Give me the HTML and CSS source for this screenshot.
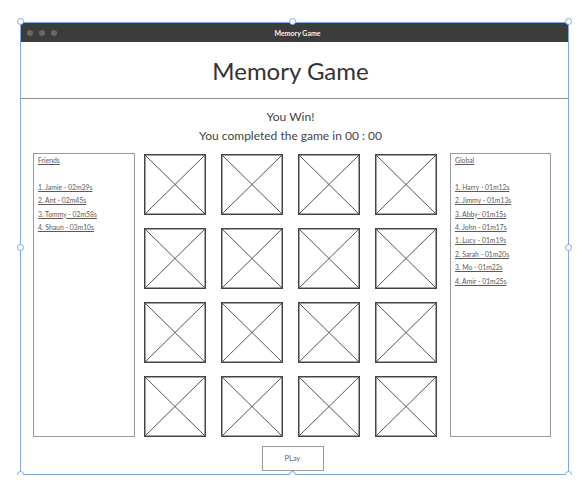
FILE: index.html
```html
<!DOCTYPE html>
<html lang="en">
<head>
<meta charset="utf-8">
<title>Memory Game</title>
<link rel="stylesheet" href="styles.css">
</head>
<body>
<div class="window">
  <div class="titlebar">
    <div class="dots"><span class="dot"></span><span class="dot"></span><span class="dot"></span></div>
    <div class="titlebar-text">Memory Game</div>
  </div>
  <header class="header"><h1 class="title">Memory Game</h1></header>
  <section class="status">
    <p class="status-line">You Win!</p>
    <p class="status-line">You completed the game in 00 : 00</p>
  </section>
  <main class="board-row">
    <aside class="panel">
      <div class="panel-title">Friends</div>
      <ol class="scores">
        <li>1. Jamie - 02m39s</li>
        <li>2. Ant - 02m45s</li>
        <li>3. Tommy - 02m58s</li>
        <li>4. Shaun - 03m10s</li>
      </ol>
    </aside>
    <div class="grid">
      <svg class="card" viewBox="0 0 62 61"><rect x="0.75" y="0.75" width="60.5" height="59.5"/><line x1="1" y1="1" x2="61" y2="60"/><line x1="61" y1="1" x2="1" y2="60"/></svg>
      <svg class="card" viewBox="0 0 62 61"><rect x="0.75" y="0.75" width="60.5" height="59.5"/><line x1="1" y1="1" x2="61" y2="60"/><line x1="61" y1="1" x2="1" y2="60"/></svg>
      <svg class="card" viewBox="0 0 62 61"><rect x="0.75" y="0.75" width="60.5" height="59.5"/><line x1="1" y1="1" x2="61" y2="60"/><line x1="61" y1="1" x2="1" y2="60"/></svg>
      <svg class="card" viewBox="0 0 62 61"><rect x="0.75" y="0.75" width="60.5" height="59.5"/><line x1="1" y1="1" x2="61" y2="60"/><line x1="61" y1="1" x2="1" y2="60"/></svg>
      <svg class="card" viewBox="0 0 62 61"><rect x="0.75" y="0.75" width="60.5" height="59.5"/><line x1="1" y1="1" x2="61" y2="60"/><line x1="61" y1="1" x2="1" y2="60"/></svg>
      <svg class="card" viewBox="0 0 62 61"><rect x="0.75" y="0.75" width="60.5" height="59.5"/><line x1="1" y1="1" x2="61" y2="60"/><line x1="61" y1="1" x2="1" y2="60"/></svg>
      <svg class="card" viewBox="0 0 62 61"><rect x="0.75" y="0.75" width="60.5" height="59.5"/><line x1="1" y1="1" x2="61" y2="60"/><line x1="61" y1="1" x2="1" y2="60"/></svg>
      <svg class="card" viewBox="0 0 62 61"><rect x="0.75" y="0.75" width="60.5" height="59.5"/><line x1="1" y1="1" x2="61" y2="60"/><line x1="61" y1="1" x2="1" y2="60"/></svg>
      <svg class="card" viewBox="0 0 62 61"><rect x="0.75" y="0.75" width="60.5" height="59.5"/><line x1="1" y1="1" x2="61" y2="60"/><line x1="61" y1="1" x2="1" y2="60"/></svg>
      <svg class="card" viewBox="0 0 62 61"><rect x="0.75" y="0.75" width="60.5" height="59.5"/><line x1="1" y1="1" x2="61" y2="60"/><line x1="61" y1="1" x2="1" y2="60"/></svg>
      <svg class="card" viewBox="0 0 62 61"><rect x="0.75" y="0.75" width="60.5" height="59.5"/><line x1="1" y1="1" x2="61" y2="60"/><line x1="61" y1="1" x2="1" y2="60"/></svg>
      <svg class="card" viewBox="0 0 62 61"><rect x="0.75" y="0.75" width="60.5" height="59.5"/><line x1="1" y1="1" x2="61" y2="60"/><line x1="61" y1="1" x2="1" y2="60"/></svg>
      <svg class="card" viewBox="0 0 62 61"><rect x="0.75" y="0.75" width="60.5" height="59.5"/><line x1="1" y1="1" x2="61" y2="60"/><line x1="61" y1="1" x2="1" y2="60"/></svg>
      <svg class="card" viewBox="0 0 62 61"><rect x="0.75" y="0.75" width="60.5" height="59.5"/><line x1="1" y1="1" x2="61" y2="60"/><line x1="61" y1="1" x2="1" y2="60"/></svg>
      <svg class="card" viewBox="0 0 62 61"><rect x="0.75" y="0.75" width="60.5" height="59.5"/><line x1="1" y1="1" x2="61" y2="60"/><line x1="61" y1="1" x2="1" y2="60"/></svg>
      <svg class="card" viewBox="0 0 62 61"><rect x="0.75" y="0.75" width="60.5" height="59.5"/><line x1="1" y1="1" x2="61" y2="60"/><line x1="61" y1="1" x2="1" y2="60"/></svg>
    </div>
    <aside class="panel panel-global">
      <div class="panel-title">Global</div>
      <ol class="scores">
        <li>1. Harry - 01m12s</li>
        <li>2. Jimmy - 01m13s</li>
        <li>3. Abby- 01m15s</li>
        <li>4. John - 01m17s</li>
        <li>1. Lucy - 01m19s</li>
        <li>2. Sarah - 01m20s</li>
        <li>3. Mo - 01m22s</li>
        <li>4. Amir - 01m25s</li>
      </ol>
    </aside>
  </main>
  <div class="actions"><button class="play">PLay</button></div>

  <span class="handle h-tl"></span>
  <span class="handle h-tc"></span>
  <span class="handle h-tr"></span>
  <span class="handle h-ml"></span>
  <span class="handle h-mr"></span>
  <span class="handle h-bl"></span>
  <span class="handle h-bc"></span>
  <span class="handle h-br"></span>
</div>
</body>
</html>
```

FILE: styles.css
```css
* { box-sizing: border-box; }

html, body {
  margin: 0;
  padding: 0;
  background: #ffffff;
}

body {
  font-family: Lato, "Open Sans", "Liberation Sans", sans-serif;
  color: #444;
}

.window {
  position: relative;
  margin: 22px 0 0 20px;
  width: 549px;
  height: 453px;
  border: 1px solid #7ea8e4;
  border-top: none;
  background: #fff;
}

.titlebar {
  position: relative;
  height: 20px;
  background: #3c3c3c;
  display: flex;
  align-items: center;
  border-top: 1px solid #7ea8e4;
}

.dots {
  display: flex;
  gap: 6px;
  padding-left: 6px;
}

.dot {
  width: 6px;
  height: 6px;
  border-radius: 50%;
  background: #676767;
}

.titlebar-text {
  position: absolute;
  left: 0;
  right: 0;
  text-align: center;
  color: #f2f2f2;
  font-size: 7px;
  font-weight: 700;
  padding-left: 6px;
}

.header {
  height: 57px;
  border-bottom: 1px solid #8a8a8a;
  display: flex;
  align-items: center;
  justify-content: center;
  padding-right: 8px;
}

.title {
  margin: 0;
  font-size: 24px;
  font-weight: 400;
  color: #333;
}

.status {
  padding-top: 8px;
  padding-right: 8px;
  text-align: center;
}

.status-line {
  margin: 0;
  font-size: 12px;
  line-height: 19px;
  color: #444;
}

.board-row {
  display: flex;
  align-items: flex-start;
  margin-top: 8px;
  padding-left: 12px;
}

.panel {
  width: 102px;
  height: 284px;
  border: 1px solid #9a9a9a;
  padding: 0 4px;
  font-size: 6.8px;
  line-height: 13.4px;
  color: #5a5a5a;
}

.panel-global {
  width: 101px;
  margin-left: 13px;
}

.panel-title {
  text-decoration: underline;
}

.scores {
  list-style: none;
  margin: 13.4px 0 0;
  padding: 0;
}

.scores li {
  text-decoration: underline;
}

.grid {
  display: grid;
  grid-template-columns: repeat(4, 62px);
  grid-auto-rows: 61px;
  column-gap: 15px;
  row-gap: 13px;
  margin-left: 9px;
  margin-top: 1px;
}

.card {
  display: block;
  width: 62px;
  height: 61px;
}

.card rect {
  fill: #fff;
  stroke: #444;
  stroke-width: 1.5;
}

.card line {
  stroke: #555;
  stroke-width: 1;
}

.actions {
  display: flex;
  justify-content: center;
  margin-top: 9px;
  padding-right: 4px;
}

.play {
  width: 62px;
  height: 25px;
  border: 1px solid #9a9a9a;
  background: #fff;
  font-family: Lato, "Liberation Sans", sans-serif;
  font-size: 7.5px;
  color: #666;
  padding: 0;
}

.handle {
  position: absolute;
  width: 7px;
  height: 7px;
  border-radius: 50%;
  background: #fff;
  border: 1px solid #7ea8e4;
}

.h-tl { left: -4px; top: -4px; }
.h-tc { left: 268px; top: -4px; }
.h-tr { right: -4px; top: -4px; }
.h-ml { left: -4px; top: 222px; }
.h-mr { right: -4px; top: 222px; }
.h-bl { left: -4px; bottom: -4px; }
.h-bc { left: 268px; bottom: -4px; }
.h-br { right: -4px; bottom: -4px; }
```
